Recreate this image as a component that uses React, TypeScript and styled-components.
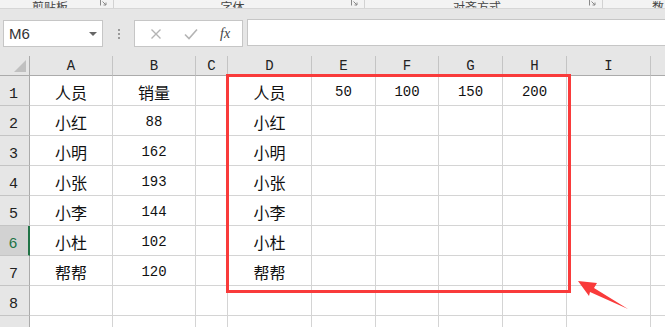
import React from 'react';
import styled, { createGlobalStyle } from 'styled-components';

const GlobalStyle = createGlobalStyle`
    html, body {
        margin:0;
        padding:0;
        background:#ffffff;
        overflow:hidden;
    }
    body {
        font-family:"Noto Sans CJK SC", "Noto Sans", sans-serif;
    }
`;

const Page = styled.div`
    width:665px;
    height:327px;
    overflow:hidden;
    display:flex;
    flex-direction:column;
    background:#ffffff;
`;

const Ribbon = styled.div`
    box-sizing:border-box;
    height:9px;
    flex-shrink:0;
    display:flex;
    background:#f3f3f3;
    border-bottom:1px solid #d6d6d6;
    overflow:hidden;
`;

const RibbonGroup = styled.div<{ $w: number }>`
    box-sizing:border-box;
    width:${p => p.$w}px;
    flex-shrink:0;
    display:flex;
    align-items:flex-end;
    border-right:1px solid #d2d2d2;
`;

const RibbonLabel = styled.span<{ $left?: number }>`
    flex-grow:1;
    text-align:${p => p.$left ? 'left' : 'center'};
    padding-left:${p => p.$left ?? 0}px;
    font-size:12px;
    line-height:14px;
    color:#444444;
    margin-bottom:-6px;
    white-space:nowrap;
`;

const Launcher = styled.svg`
    width:7px;
    height:7px;
    margin:0 6px 2px 0;
    flex-shrink:0;
`;

const FormulaBar = styled.div`
    box-sizing:border-box;
    height:47px;
    flex-shrink:0;
    display:flex;
    align-items:flex-start;
    padding:11px 0 0 3px;
    background:#e6e6e6;
`;

const NameBox = styled.div`
    box-sizing:border-box;
    width:100px;
    height:27px;
    background:#ffffff;
    border:1px solid #c6c6c6;
    display:flex;
    align-items:center;
    justify-content:space-between;
    padding:0 5px 0 5px;
    font-family:"Liberation Sans", Arial, sans-serif;
    font-size:15px;
    color:#333333;
`;

const DropArrow = styled.span`
    width:0;
    height:0;
    border-left:4px solid transparent;
    border-right:4px solid transparent;
    border-top:4px solid #666666;
`;

const Dots = styled.div`
    width:31px;
    height:27px;
    display:flex;
    flex-direction:column;
    align-items:center;
    justify-content:center;
    gap:2px;
    span {
        width:2px;
        height:2px;
        background:#9a9a9a;
    }
`;

const ButtonBox = styled.div`
    box-sizing:border-box;
    width:109px;
    height:27px;
    background:#ffffff;
    border:1px solid #c6c6c6;
    display:flex;
    align-items:center;
    padding-left:15px;
    gap:22px;
`;

const FxButton = styled.span`
    font-family:"Liberation Serif", "Times New Roman", serif;
    font-style:italic;
    font-size:14px;
    color:#444444;
`;

const FormulaInput = styled.div`
    box-sizing:border-box;
    flex-grow:1;
    height:27px;
    margin-left:4px;
    margin-top:-1px;
    background:#ffffff;
    border:1px solid #c6c6c6;
    border-right:none;
`;

const SheetArea = styled.div`
    position:relative;
    flex-grow:1;
    overflow:hidden;
`;

const Grid = styled.div`
    display:grid;
    grid-template-columns:30px 83px 83px 32px 84px 64px 63px 64px 64px 84px 40px;
    grid-auto-rows:30px;
    grid-template-rows:20px;
`;

const Corner = styled.div`
    box-sizing:border-box;
    background:#e6e6e6;
    border-right:1px solid #ababab;
    border-bottom:1px solid #ababab;
    display:flex;
    align-items:flex-end;
    justify-content:flex-end;
    padding:0 3px 3px 0;
`;

const CornerTri = styled.span`
    width:0;
    height:0;
    border-left:12px solid transparent;
    border-bottom:12px solid #c0c0c0;
`;

const ColHead = styled.div`
    box-sizing:border-box;
    background:#e6e6e6;
    border-right:1px solid #c4c4c4;
    border-bottom:1px solid #ababab;
    display:flex;
    align-items:center;
    justify-content:center;
    font-family:"Liberation Mono", "Courier New", monospace;
    font-size:14px;
    color:#222222;
    padding-top:1px;
`;

const RowHead = styled.div<{ $active?: boolean }>`
    box-sizing:border-box;
    background:${p => p.$active ? '#d2d2d2' : '#e6e6e6'};
    border-right:${p => p.$active ? '2px solid #217346' : '1px solid #ababab'};
    border-bottom:1px solid #c4c4c4;
    display:flex;
    align-items:flex-end;
    justify-content:center;
    padding:0 2px 2px 0;
    font-family:"Liberation Mono", "Courier New", monospace;
    font-size:15px;
    color:${p => p.$active ? '#217346' : '#222222'};
`;

const Cell = styled.div<{ $num?: boolean }>`
    box-sizing:border-box;
    border-right:1px solid #d4d4d4;
    border-bottom:1px solid #d4d4d4;
    display:flex;
    align-items:center;
    justify-content:center;
    padding-top:3px;
    font-family:"Liberation Mono", "Noto Sans CJK SC", monospace;
    font-size:${p => p.$num ? '14px' : '16px'};
    color:#111111;
    white-space:nowrap;
`;

const Highlight = styled.div`
    position:absolute;
    box-sizing:border-box;
    left:226px;
    top:18px;
    width:345px;
    height:219px;
    border:3px solid #f93b3b;
    pointer-events:none;
`;

const Arrow = styled.svg`
    position:absolute;
    left:570px;
    top:219px;
    width:65px;
    height:45px;
`;

const columns = ['A', 'B', 'C', 'D', 'E', 'F', 'G', 'H', 'I', ''];

const rows: string[][] = [
    ['人员', '销量', '', '人员', '50', '100', '150', '200', '', ''],
    ['小红', '88', '', '小红', '', '', '', '', '', ''],
    ['小明', '162', '', '小明', '', '', '', '', '', ''],
    ['小张', '193', '', '小张', '', '', '', '', '', ''],
    ['小李', '144', '', '小李', '', '', '', '', '', ''],
    ['小杜', '102', '', '小杜', '', '', '', '', '', ''],
    ['帮帮', '120', '', '帮帮', '', '', '', '', '', ''],
    ['', '', '', '', '', '', '', '', '', ''],
    ['', '', '', '', '', '', '', '', '', ''],
];

const ribbonGroups = [
    { label: '剪贴板', w: 114, launcher: true },
    { label: '字体', w: 251, launcher: true },
    { label: '对齐方式', w: 238, launcher: true },
    { label: '数', w: 80, launcher: false, left: 49 },
];

const LauncherIcon = () => (
    <Launcher viewBox="0 0 7 7">
        <path d="M0.5 6.5V0.5H6.5" fill="none" stroke="#8a8a8a" strokeWidth="1" />
        <path d="M2.5 2.5L6 6M6 3.5V6H3.5" fill="none" stroke="#8a8a8a" strokeWidth="1" />
    </Launcher>
);

const App = () => {
    return (
        <Page>
            <GlobalStyle />
            <Ribbon>
                {ribbonGroups.map(g => (
                    <RibbonGroup key={g.label} $w={g.w}>
                        <RibbonLabel $left={g.left}>{g.label}</RibbonLabel>
                        {g.launcher && <LauncherIcon />}
                    </RibbonGroup>
                ))}
            </Ribbon>
            <FormulaBar>
                <NameBox>
                    M6
                    <DropArrow />
                </NameBox>
                <Dots>
                    <span />
                    <span />
                    <span />
                </Dots>
                <ButtonBox>
                    <svg width="12" height="12" viewBox="0 0 12 12">
                        <path d="M1.5 1.5L10.5 10.5M10.5 1.5L1.5 10.5" stroke="#b4b4b4" strokeWidth="1.4" />
                    </svg>
                    <svg width="14" height="12" viewBox="0 0 14 12">
                        <path d="M1 6.5L5 10.5L13 1.5" fill="none" stroke="#b4b4b4" strokeWidth="1.6" />
                    </svg>
                    <FxButton>fx</FxButton>
                </ButtonBox>
                <FormulaInput />
            </FormulaBar>
            <SheetArea>
                <Grid>
                    <Corner>
                        <CornerTri />
                    </Corner>
                    {columns.map((c, i) => (
                        <ColHead key={'h' + i}>{c}</ColHead>
                    ))}
                    {rows.map((r, ri) => (
                        <React.Fragment key={'r' + ri}>
                            <RowHead $active={ri === 5}>{ri + 1}</RowHead>
                            {r.map((v, ci) => (
                                <Cell key={ci} $num={/^\d+$/.test(v)}>{v}</Cell>
                            ))}
                        </React.Fragment>
                    ))}
                </Grid>
                <Highlight />
                <Arrow viewBox="0 0 65 45">
                    <polygon points="8,6 27,8 24,13 58,34 20,17 19,21" fill="#f93b3b" />
                </Arrow>
            </SheetArea>
        </Page>
    );
};

export default App;
